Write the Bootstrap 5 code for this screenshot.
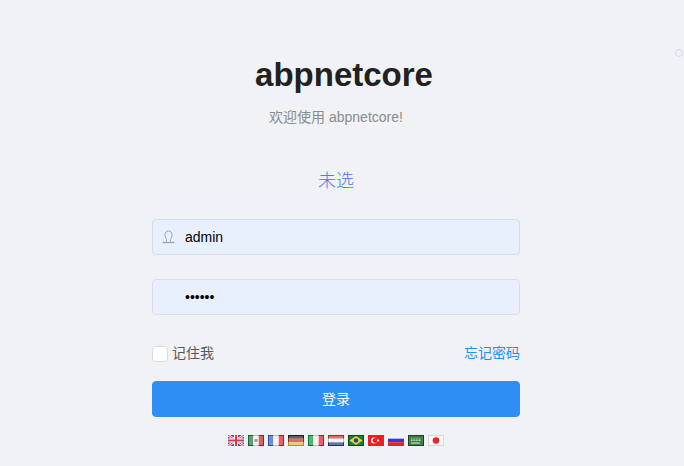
<!DOCTYPE html>
<html lang="zh">
  <head>
    <meta charset="utf-8" />
    <meta name="viewport" content="width=device-width, initial-scale=1.0" />
    <title>abpnetcore</title>
    <link href="https://cdn.jsdelivr.net/npm/bootstrap@5.3.0/dist/css/bootstrap.min.css" rel="stylesheet" />
    <style>
      html, body {
        height: 100%;
        overflow: hidden;
      }
      body {
        background: #f0f2f5;
        font-family: "Liberation Sans", "Noto Sans CJK SC", sans-serif;
        font-size: 14px;
        color: #595959;
      }
      .login-page {
        padding-top: 50px;
        padding-right: 12px;
      }
      .login-title {
        font-size: 33px;
        line-height: 50px;
        font-weight: 700;
        color: #212121;
        margin: 0 0 0 16px;
      }
      .login-sub {
        color: #8c8c8c;
        line-height: 22px;
        margin-top: 6px;
      }
      .login-form {
        width: 368px;
      }
      .tenant-link {
        font-size: 18px;
        line-height: 26px;
        color: #3f80f2;
        margin-top: 40px;
        margin-bottom: 25px;
        text-decoration: none;
        display: block;
        font-weight: 300;
      }
      .login-field {
        height: 36px;
        background: #e8f0fe;
        border: 1px solid #d9dfe8;
        border-radius: 4px;
        margin-bottom: 24px;
        padding-left: 32px;
        color: #000;
        font-size: 14px;
      }
      .login-field:focus {
        background: #e8f0fe;
        box-shadow: none;
      }
      .field-icon {
        position: absolute;
        left: 10px;
        top: 11px;
      }
      .remember-box {
        width: 16px;
        height: 16px;
        background: #fff;
        border: 1px solid #d9d9d9;
        border-radius: 2px;
        margin: 0;
      }
      .forgot-link {
        color: #1890ff;
        text-decoration: none;
      }
      .remember-row {
        margin-top: 28px;
        margin-bottom: 17px;
      }
      .login-btn {
        height: 36px;
        background: #2d8ff5;
        border-color: #2d8ff5;
        font-size: 14px;
        border-radius: 4px;
        padding: 0;
      }
      .flag-row {
        gap: 4px;
        margin-top: 18px;
      }
      .flag-row svg {
        display: block;
      }
      .corner-dot {
        position: absolute;
        left: 675px;
        top: 49px;
        width: 8px;
        height: 8px;
        border: 1px solid #d3dcf0;
        border-radius: 50%;
      }
    </style>
  </head>
  <body>
    <div class="corner-dot"></div>
    <svg width="0" height="0" class="position-absolute">
      <defs>
        <g id="flagGloss">
          <rect x="1" y="1" width="14" height="9" fill="#fff" opacity=".28" />
          <rect x=".5" y=".5" width="15" height="10" fill="none" stroke="#000" stroke-opacity=".22" />
        </g>
      </defs>
    </svg>
    <div class="login-page d-flex flex-column align-items-center text-center">
      <h1 class="login-title">abpnetcore</h1>
      <div class="login-sub">欢迎使用 abpnetcore!</div>
      <div class="login-form">
        <a class="tenant-link" href="#">未选</a>
        <div class="position-relative">
          <svg class="field-icon" width="13" height="14" viewBox="0 0 13 14" fill="none" stroke="#9aa3b5">
            <path d="M4.500 9.500C3.500 8 3 6.500 3 4.800 3 2.500 4.500 1 6.500 1S10 2.500 10 4.800C10 6.500 9.500 8 8.500 9.500" />
            <path d="M4.500 9.500V11.500M8.500 9.500V11.500" />
            <path d="M.5 12.500H12.500" stroke-width="1.300" />
          </svg>
          <input class="form-control login-field" type="text" value="admin" />
        </div>
        <input class="form-control login-field mb-0" type="password" value="123456" />
        <div class="remember-row d-flex justify-content-between align-items-center">
          <label class="d-flex align-items-center gap-1">
            <input class="remember-box form-check-input" type="checkbox" />
            <span>记住我</span>
          </label>
          <a class="forgot-link" href="#">忘记密码</a>
        </div>
        <button class="btn btn-primary login-btn w-100" type="button">登录</button>
        <div class="flag-row d-flex justify-content-center">
          <svg width="16" height="11" viewBox="0 0 16 11"><rect width="16" height="11" fill="#3d4f9f"/><path d="M0 0L16 11M16 0L0 11" stroke="#fff" stroke-width="2.500"/><path d="M0 0L16 11M16 0L0 11" stroke="#d9374b"/><path d="M8 0V11M0 5.500H16" stroke="#fff" stroke-width="4"/><path d="M8 0V11M0 5.500H16" stroke="#d9374b" stroke-width="2"/></svg>
          <svg width="16" height="11" viewBox="0 0 16 11"><rect width="5.300" height="11" fill="#1f7a3d"/><rect x="5.300" width="5.400" height="11" fill="#eef2ec"/><rect x="10.700" width="5.300" height="11" fill="#c8262c"/><circle cx="8" cy="5.500" r="1.800" fill="#8c7a4f"/><use href="#flagGloss"/></svg>
          <svg width="16" height="11" viewBox="0 0 16 11"><rect width="5.300" height="11" fill="#3c63cc"/><rect x="5.300" width="5.400" height="11" fill="#eff1f7"/><rect x="10.700" width="5.300" height="11" fill="#e4222d"/><use href="#flagGloss"/></svg>
          <svg width="16" height="11" viewBox="0 0 16 11"><rect width="16" height="3.700" fill="#222"/><rect y="3.700" width="16" height="3.600" fill="#d4322c"/><rect y="7.300" width="16" height="3.700" fill="#e6b72e"/><use href="#flagGloss"/></svg>
          <svg width="16" height="11" viewBox="0 0 16 11"><rect width="5.300" height="11" fill="#12983f"/><rect x="5.300" width="5.400" height="11" fill="#f2f4f2"/><rect x="10.700" width="5.300" height="11" fill="#e4222d"/><use href="#flagGloss"/></svg>
          <svg width="16" height="11" viewBox="0 0 16 11"><rect width="16" height="3.700" fill="#d8343c"/><rect y="3.700" width="16" height="3.600" fill="#f4f4f6"/><rect y="7.300" width="16" height="3.700" fill="#2a3f8f"/><use href="#flagGloss"/></svg>
          <svg width="16" height="11" viewBox="0 0 16 11"><rect width="16" height="11" fill="#16803a"/><path d="M8 1L14.500 5.500 8 10 1.500 5.500Z" fill="#f2d62a"/><circle cx="8" cy="5.500" r="2.300" fill="#26478f"/><rect x=".5" y=".5" width="15" height="10" fill="none" stroke="#000" stroke-opacity=".45"/></svg>
          <svg width="16" height="11" viewBox="0 0 16 11"><rect width="16" height="11" fill="#ee1c25"/><circle cx="6" cy="5.500" r="3" fill="#fff"/><circle cx="7" cy="5.500" r="2.400" fill="#ee1c25"/><circle cx="10" cy="5.500" r="1.100" fill="#fff"/></svg>
          <svg width="16" height="11" viewBox="0 0 16 11"><rect width="16" height="3.700" fill="#f4f4f8"/><rect y="3.700" width="16" height="3.600" fill="#2b3fc0"/><rect y="7.300" width="16" height="3.700" fill="#e4222d"/></svg>
          <svg width="16" height="11" viewBox="0 0 16 11"><rect width="16" height="11" fill="#3f8046"/><path d="M3 4H13M3 5.500H13" stroke="#cfe0cf" stroke-dasharray="1 .6"/><path d="M3 8H12" stroke="#dfeadf"/><rect x=".5" y=".5" width="15" height="10" fill="none" stroke="#000" stroke-opacity=".5"/></svg>
          <svg width="16" height="11" viewBox="0 0 16 11"><rect width="16" height="11" fill="#f7f7f7"/><circle cx="8" cy="5.500" r="3.300" fill="#e9242c"/><rect x=".5" y=".5" width="15" height="10" fill="none" stroke="#000" stroke-opacity=".12"/></svg>
        </div>
      </div>
    </div>
    <script src="https://cdn.jsdelivr.net/npm/bootstrap@5.3.0/dist/js/bootstrap.bundle.min.js"></script>
  </body>
</html>
